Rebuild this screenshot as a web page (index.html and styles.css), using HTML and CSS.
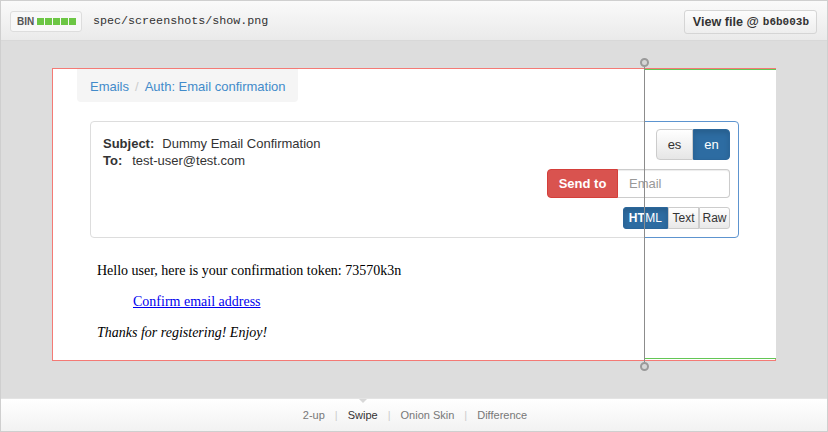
FILE: index.html
```html
<!DOCTYPE html>
<html>
<head>
<meta charset="utf-8">
<link rel="stylesheet" href="styles.css">
</head>
<body>
<div class="file">
  <div class="file-header">
    <div class="file-info">
      <span class="bin-badge">BIN <span class="bars"><i></i><i></i><i></i><i></i><i></i></span></span>
      <span class="file-path">spec/screenshots/show.png</span>
    </div>
    <a class="view-btn">View file @ <code>b6b003b</code></a>
  </div>
  <div class="file-body">
    <div class="swipe-frame">
      <div class="shot shot-old">
        <div class="page">
          <div class="breadcrumb"><a>Emails</a><span class="sep">/</span><a>Auth: Email confirmation</a></div>
          <div class="panel">
            <div class="headers">
              <div><b>Subject:</b>Dummy Email Confirmation</div>
              <div><b>To:</b>test-user@test.com</div>
            </div>
            <div class="actions">
              <div class="btn-group"><span class="btn">es</span><span class="btn active">en</span></div>
              <div class="send-row"><span class="btn-send">Send to</span><span class="email-input">Email</span></div>
              <div class="btn-group small"><span class="btn active">HTML</span><span class="btn">Text</span><span class="btn">Raw</span></div>
            </div>
          </div>
          <div class="mail-body">
            <p>Hello user, here is your confirmation token: 73570k3n</p>
            <p class="indent"><a>Confirm email address</a></p>
            <p><em>Thanks for registering! Enjoy!</em></p>
          </div>
        </div>
      </div>
      <div class="shot shot-new">
        <div class="page">
          <div class="breadcrumb"><a>Emails</a><span class="sep">/</span><a>Auth: Email confirmation</a></div>
          <div class="panel">
            <div class="headers">
              <div><b>Subject:</b>Dummy Email Confirmation</div>
              <div><b>To:</b>test-user@test.com</div>
            </div>
            <div class="actions">
              <div class="btn-group"><span class="btn">es</span><span class="btn active">en</span></div>
              <div class="send-row"><span class="btn-send">Send to</span><span class="email-input">Email</span></div>
              <div class="btn-group small"><span class="btn active">HTML</span><span class="btn">Text</span><span class="btn">Raw</span></div>
            </div>
          </div>
          <div class="mail-body">
            <p>Hello user, here is your confirmation token: 73570k3n</p>
            <p class="indent"><a>Confirm email address</a></p>
            <p><em>Thanks for registering! Enjoy!</em></p>
          </div>
        </div>
      </div>
      <div class="swipe-bar"><span class="handle top"></span><span class="handle bottom"></span></div>
    </div>
  </div>
  <div class="file-footer">
    <a>2-up</a><span class="pipe">|</span><a class="current">Swipe</a><span class="pipe">|</span><a>Onion Skin</a><span class="pipe">|</span><a>Difference</a>
  </div>
</div>
</body>
</html>
```

FILE: styles.css
```css
html, body { margin: 0; padding: 0; }
body { font-family: "Liberation Sans", Arial, sans-serif; color: #333; }

.file {
  width: 828px;
  height: 432px;
  box-sizing: border-box;
  border: 1px solid #cfcfcf;
  display: flex;
  flex-direction: column;
  overflow: hidden;
}

.file-header {
  height: 39px;
  border-bottom: 1px solid #d8d8d8;
  background: linear-gradient(#fafafa, #eaeaea);
  display: flex;
  align-items: center;
  justify-content: space-between;
  padding: 0 10px 0 9px;
}
.file-info { display: flex; align-items: center; }
.bin-badge {
  display: flex;
  align-items: center;
  height: 21px;
  box-sizing: border-box;
  border: 1px solid #ddd;
  border-radius: 3px;
  background: #f8f8f8;
  padding: 0 5px 0 6px;
  font-size: 10px;
  font-weight: bold;
  color: #555;
  width: 72px;
  margin-top: 1px;
}
.bars { display: flex; gap: 1px; margin-left: 3px; }
.bars i { display: block; width: 7px; height: 7px; background: #6cc644; }
.file-path {
  font-family: "Liberation Mono", "DejaVu Sans Mono", monospace;
  font-size: 11.7px;
  color: #333;
  margin-left: 11px;
}
.view-btn {
  display: flex;
  align-items: center;
  white-space: nowrap;
  height: 24px;
  box-sizing: border-box;
  padding: 0 7px 0 8px;
  border: 1px solid #d5d5d5;
  border-radius: 3px;
  background: linear-gradient(#fcfcfc, #eeeeee);
  font-size: 12.6px;
  font-weight: bold;
  color: #333;
  margin-top: 2px;
}
.view-btn code {
  font-family: "Liberation Mono", "DejaVu Sans Mono", monospace;
  font-size: 11px;
  font-weight: bold;
  margin-left: 4px;
}

.file-body {
  flex: 1;
  background: #dddddd;
  padding-top: 27px;
}

.swipe-frame {
  position: relative;
  width: 724px;
  height: 293px;
  margin: 0 auto;
  box-sizing: border-box;
}

.shot { background: #fff; overflow: hidden; }
.shot-old {
  height: 100%;
  box-sizing: border-box;
  border: 1px solid #f47a75;
}
.shot-new {
  position: absolute;
  top: 1px;
  left: 0;
  right: 0;
  height: 290px;
  box-sizing: border-box;
  border-top: 1px solid #63c655;
  border-bottom: 1px solid #63c655;
  clip-path: inset(0 0 0 592px);
}
.shot-new .page { margin-top: -1px; padding-left: 1px; }

.page { position: relative; }

.breadcrumb {
  margin-left: 24px;
  width: max-content;
  height: 33px;
  box-sizing: border-box;
  background: #f5f5f5;
  border-radius: 0 0 4px 4px;
  padding: 1px 12px 0 13px;
  display: flex;
  align-items: center;
  white-space: nowrap;
  font-size: 13px;
  color: #428bca;
}
.breadcrumb .sep { color: #ccc; margin: 0 6px 0 6px; }

.panel {
  margin: 19px 0 0 37px;
  width: 649px;
  height: 117px;
  box-sizing: border-box;
  border: 1px solid #dddddd;
  border-radius: 4px;
  display: flex;
  justify-content: space-between;
  padding: 7px 8px 8px 12px;
}
.shot-new .panel { border-color: #5d94cf; }

.headers { font-size: 13px; line-height: 17px; padding-top: 6px; color: #333; }
.headers b { color: #333; margin-right: 8px; }
.headers div + div b { margin-right: 10px; }

.actions {
  display: flex;
  flex-direction: column;
  align-items: flex-end;
  gap: 9px;
}
.btn-group { display: flex; }
.btn-group .btn {
  height: 31px;
  box-sizing: border-box;
  display: flex;
  align-items: center;
  justify-content: center;
  width: 37px;
  font-size: 13px;
  color: #333;
  border: 1px solid #ccc;
  background: linear-gradient(#fff, #e6e6e6);
}
.btn-group .btn:first-child { border-radius: 4px 0 0 4px; }
.btn-group .btn:last-child { border-radius: 0 4px 4px 0; }
.btn-group .btn.active {
  background: #2d6ca2;
  border-color: #2b669a;
  color: #fff;
  box-shadow: inset 0 3px 5px rgba(0,0,0,0.125);
}
.btn-group.small .btn {
  height: 22px;
  font-size: 12px;
  width: 31px;
  border-radius: 0;
  background: linear-gradient(#fff, #e8e8e8);
}
.btn-group.small .btn:first-child { border-radius: 3px 0 0 3px; width: 45px; }
.btn-group.small .btn:last-child { border-radius: 0 3px 3px 0; }
.btn-group.small .btn.active { background: #2d6ca2; }
.shot-old .btn-group.small .btn.active { font-weight: bold; }

.send-row { display: flex; height: 31px; }
.btn-send {
  width: 71px;
  box-sizing: border-box;
  background: #d9534f;
  border: 1px solid #d43f3a;
  border-radius: 4px 0 0 4px;
  color: #fff;
  font-weight: bold;
  font-size: 13px;
  display: flex;
  align-items: center;
  justify-content: center;
}
.email-input {
  width: 112px;
  box-sizing: border-box;
  border: 1px solid #ccc;
  border-left: none;
  border-radius: 0 4px 4px 0;
  color: #999;
  font-size: 13px;
  display: flex;
  align-items: center;
  padding-left: 11px;
  box-shadow: inset 0 1px 1px rgba(0,0,0,0.075);
}

.mail-body {
  font-family: "Liberation Serif", "Times New Roman", serif;
  font-size: 14px;
  color: #000;
  padding: 24px 0 0 44px;
}
.mail-body p { margin: 0 0 13px; line-height: 18px; }
.mail-body .indent { padding-left: 36px; }
.mail-body a { color: #0000ee; text-decoration: underline; }

.swipe-bar {
  position: absolute;
  left: 592px;
  top: -6px;
  width: 1px;
  height: 303px;
  background: #8c8c8c;
}
.handle {
  position: absolute;
  left: -4px;
  width: 9px;
  height: 9px;
  box-sizing: border-box;
  border-radius: 50%;
  border: 2px solid #9a9a9a;
  background: #d6d6d6;
}
.handle.top { top: -4px; }
.handle.bottom { bottom: -6px; }

.file-footer {
  height: 32px;
  border-top: 1px solid #e4e4e4;
  background: linear-gradient(#ffffff, #f2f2f2);
  display: flex;
  align-items: center;
  justify-content: center;
  font-size: 11px;
  color: #666;
  position: relative;
  padding-left: 2px;
}
.file-footer a { color: #777; }
.file-footer a.current { color: #333; position: relative; }
.file-footer a.current::before {
  content: "";
  position: absolute;
  left: 50%;
  top: -10px;
  margin-left: -4px;
  border-left: 4px solid transparent;
  border-right: 4px solid transparent;
  border-top: 4px solid #d8d8d8;
}
.pipe { color: #ccc; margin: 0 10px; }
```
